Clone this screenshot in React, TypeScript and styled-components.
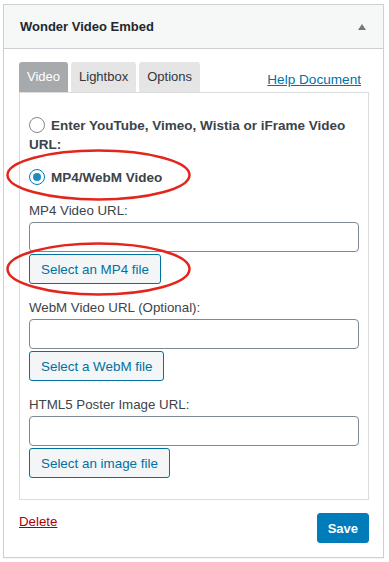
import { useState } from "react";
import styled, { createGlobalStyle } from "styled-components";

const GlobalStyle = createGlobalStyle`
  body {
    margin: 0;
    background: #fff;
    font-family: "Liberation Sans", Arial, sans-serif;
    color: #3c434a;
  }
  * { box-sizing: border-box; }
`;

const Page = styled.div`
  position: relative;
  width: 389px;
  height: 562px;
  padding: 4px 0 0 3px;
`;

const Panel = styled.div`
  width: 381px;
  border: 1px solid #ccd0d4;
  background: #fff;
  box-shadow: 0 1px 1px rgba(0, 0, 0, 0.04);
`;

const PanelHeader = styled.div`
  display: flex;
  align-items: center;
  justify-content: space-between;
  height: 44px;
  padding: 0 17px 0 16px;
  background: #f6f7f7;
  border-bottom: 1px solid #ccd0d4;
`;

const PanelTitle = styled.h2`
  margin: 0;
  font-size: 13px;
  font-weight: 700;
  color: #23282d;
`;

const CollapseArrow = styled.span`
  width: 0;
  height: 0;
  border-left: 4px solid transparent;
  border-right: 4px solid transparent;
  border-bottom: 6px solid #72777c;
`;

const PanelBody = styled.div`
  padding: 13px 14px 14px 15px;
`;

const TabBar = styled.div`
  display: flex;
  height: 30px;
  gap: 3px;
`;

const Tab = styled.button<{ $active?: boolean }>`
  height: 30px;
  padding: 0 8px;
  border: none;
  border-radius: 3px 3px 0 0;
  font-family: inherit;
  font-size: 13px;
  line-height: 30px;
  cursor: pointer;
  background: ${(p) => (p.$active ? "#a7aaad" : "#e5e5e5")};
  color: ${(p) => (p.$active ? "#fff" : "#32373c")};
`;

const HelpLink = styled.a`
  margin-left: auto;
  margin-right: 8px;
  padding-top: 5px;
  font-size: 13.6px;
  line-height: 26px;
  color: #0073aa;
  text-decoration: underline;
`;

const TabContent = styled.div`
  border: 1px solid #dcdcde;
  padding: 23px 9px 21px;
`;

const RadioRow = styled.label`
  display: block;
  font-size: 13.5px;
  font-weight: 700;
  line-height: 19px;
  color: #3c434a;
  cursor: pointer;

  & + & {
    margin-top: 14px;
  }
`;

const Radio = styled.input`
  appearance: none;
  position: relative;
  width: 16px;
  height: 16px;
  margin: 0 6px 0 0;
  vertical-align: -3px;
  border: 1px solid #7e8993;
  border-radius: 50%;
  background: #fff;

  &:checked {
    border-color: #007cba;
  }
  &:checked::before {
    content: "";
    position: absolute;
    top: 3px;
    left: 3px;
    width: 8px;
    height: 8px;
    border-radius: 50%;
    background: #1e8cbe;
  }
`;

const FieldGroup = styled.div`
  margin-top: 15px;
`;

const FieldLabel = styled.div`
  font-size: 13.3px;
  line-height: 18px;
  color: #3c434a;
  margin-bottom: 2px;
`;

const TextInput = styled.input`
  display: block;
  width: 100%;
  height: 30px;
  margin: 0 0 2px;
  padding: 0 8px;
  border: 1px solid #7e8993;
  border-radius: 4px;
  font-family: inherit;
  font-size: 13px;
  background: #fff;
`;

const SecondaryButton = styled.button`
  height: 30px;
  padding: 0 11px;
  border: 1px solid #0071a1;
  border-radius: 3px;
  background: #f3f5f6;
  color: #0071a1;
  font-family: inherit;
  font-size: 13.4px;
  cursor: pointer;
`;

const Footer = styled.div`
  display: flex;
  justify-content: space-between;
  align-items: flex-start;
  margin-top: 13px;
`;

const DeleteLink = styled.a`
  font-size: 13.3px;
  line-height: 18px;
  color: #a00;
  text-decoration: underline;
`;

const PrimaryButton = styled.button`
  height: 30px;
  padding: 0 10px;
  border: 1px solid #007cba;
  border-radius: 3px;
  background: #007cba;
  color: #fff;
  font-family: inherit;
  font-size: 13px;
  font-weight: 600;
  cursor: pointer;
`;

const Annotations = styled.svg`
  position: absolute;
  top: 0;
  left: 0;
  pointer-events: none;
`;

const fields = [
  { label: "MP4 Video URL:", button: "Select an MP4 file" },
  { label: "WebM Video URL (Optional):", button: "Select a WebM file" },
  { label: "HTML5 Poster Image URL:", button: "Select an image file" },
];

export default function App() {
  const [tab, setTab] = useState("Video");
  const [source, setSource] = useState("mp4");

  return (
    <Page>
      <GlobalStyle />
      <Panel>
        <PanelHeader>
          <PanelTitle>Wonder Video Embed</PanelTitle>
          <CollapseArrow />
        </PanelHeader>
        <PanelBody>
          <TabBar>
            {["Video", "Lightbox", "Options"].map((t) => (
              <Tab key={t} $active={tab === t} onClick={() => setTab(t)}>
                {t}
              </Tab>
            ))}
            <HelpLink href="#">Help Document</HelpLink>
          </TabBar>
          <TabContent>
            <RadioRow>
              <Radio
                type="radio"
                name="source"
                checked={source === "url"}
                onChange={() => setSource("url")}
              />
              Enter YouTube, Vimeo, Wistia or iFrame Video URL:
            </RadioRow>
            <RadioRow>
              <Radio
                type="radio"
                name="source"
                checked={source === "mp4"}
                onChange={() => setSource("mp4")}
              />
              MP4/WebM Video
            </RadioRow>
            {fields.map((f) => (
              <FieldGroup key={f.label}>
                <FieldLabel>{f.label}</FieldLabel>
                <TextInput type="text" />
                <SecondaryButton>{f.button}</SecondaryButton>
              </FieldGroup>
            ))}
          </TabContent>
          <Footer>
            <DeleteLink href="#">Delete</DeleteLink>
            <PrimaryButton>Save</PrimaryButton>
          </Footer>
        </PanelBody>
      </Panel>
      {/* red highlight rings drawn over the form */}
      <Annotations width="389" height="562" viewBox="0 0 389 562">
        <ellipse cx="98.5" cy="175" rx="91" ry="24.5" fill="none" stroke="#e3261c" strokeWidth="2.5" />
        <ellipse cx="98.5" cy="269" rx="91" ry="25.5" fill="none" stroke="#e3261c" strokeWidth="2.5" />
      </Annotations>
    </Page>
  );
}
